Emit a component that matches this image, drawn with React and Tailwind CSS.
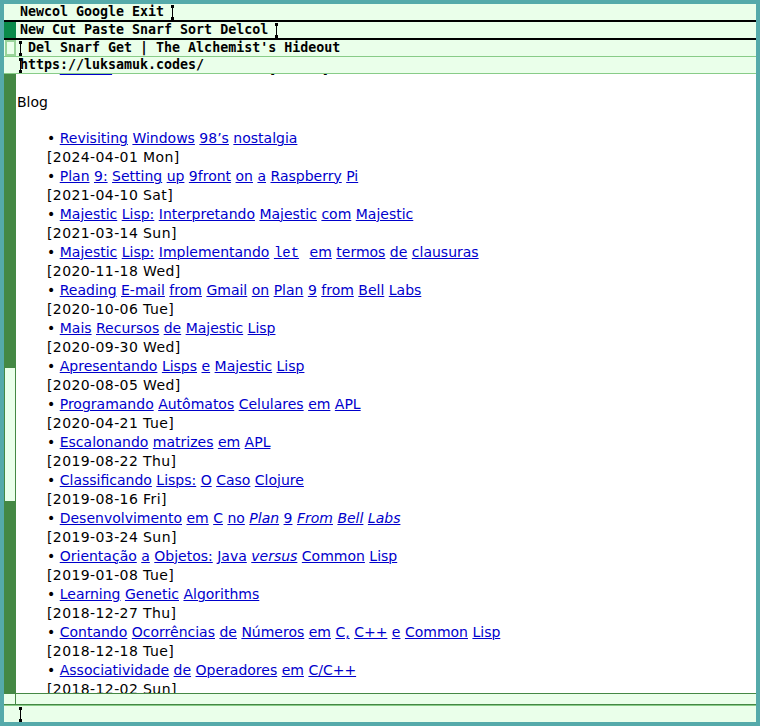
const posts = [
  ['Revisiting Windows 98’s nostalgia', '[2024-04-01 Mon]'],
  ['Plan 9: Setting up 9front on a Raspberry Pi', '[2021-04-10 Sat]'],
  ['Majestic Lisp: Interpretando Majestic com Majestic', '[2021-03-14 Sun]'],
  [['Majestic', 'Lisp:', 'Implementando', { t: 'let', mono: true }, 'em', 'termos', 'de', 'clausuras'], '[2020-11-18 Wed]'],
  ['Reading E-mail from Gmail on Plan 9 from Bell Labs', '[2020-10-06 Tue]'],
  ['Mais Recursos de Majestic Lisp', '[2020-09-30 Wed]'],
  ['Apresentando Lisps e Majestic Lisp', '[2020-08-05 Wed]'],
  ['Programando Autômatos Celulares em APL', '[2020-04-21 Tue]'],
  ['Escalonando matrizes em APL', '[2019-08-22 Thu]'],
  ['Classificando Lisps: O Caso Clojure', '[2019-08-16 Fri]'],
  [['Desenvolvimento', 'em', 'C', 'no', { t: 'Plan', i: true }, '9', { t: 'From', i: true }, { t: 'Bell', i: true }, { t: 'Labs', i: true }], '[2019-03-24 Sun]'],
  [['Orientação', 'a', 'Objetos:', 'Java', { t: 'versus', i: true }, 'Common', 'Lisp'], '[2019-01-08 Tue]'],
  ['Learning Genetic Algorithms', '[2018-12-27 Thu]'],
  ['Contando Ocorrências de Números em C, C++ e Common Lisp', '[2018-12-18 Tue]'],
  ['Associatividade de Operadores em C/C++', '[2018-12-02 Sun]'],
]

// acme-style text cursor
const Tick = () => (
  <svg width="3" height="15" viewBox="0 0 3 15" className="-ml-[1px] -mr-[2px] shrink-0">
    <rect x="0" y="0" width="3" height="3" fill="#000" />
    <rect x="1" y="0" width="1" height="15" fill="#000" />
    <rect x="0" y="12" width="3" height="3" fill="#000" />
  </svg>
)

function Title({ words }) {
  const list = typeof words === 'string' ? words.split(' ') : words
  return list.map((w, i) => {
    const word = typeof w === 'string' ? { t: w } : w
    return (
      <span key={i}>
        {i > 0 && ' '}
        <a
          href="#"
          className={
            'text-[#0000CC] underline decoration-1 ' +
            (word.i ? 'italic ' : '') +
            (word.mono ? "font-['Liberation_Mono',monospace] mr-[6px] " : '')
          }
        >
          {word.t}
        </a>
      </span>
    )
  })
}

function App() {
  return (
    <div className="h-[726px] w-[760px] bg-[#55AAAA] p-[4px]">
      <div className="flex h-full flex-col overflow-hidden">
        {/* tags */}
        <div className="font-['DejaVu_Sans_Mono',monospace] text-[13.3px] font-bold leading-[16px] text-black">
          <div className="flex h-[16px] items-center bg-[#EAFFEA] pl-[16px]">
            <span className="whitespace-pre">Newcol Google Exit </span>
            <Tick />
          </div>
          <div className="h-[2px] bg-black" />
          <div className="flex h-[16px] items-center bg-[#EAFFEA]">
            <div className="h-full w-[12px] bg-[#0B8A4A]" />
            <span className="whitespace-pre pl-[4px]">New Cut Paste Snarf Sort Delcol </span>
            <Tick />
          </div>
          <div className="h-[2px] bg-black" />
          <div className="flex h-[16px] items-center bg-[#EAFFEA]">
            <div className="ml-[1px] h-full w-[11px] border-2 border-[#9AD49A] bg-[#EAFFEA]" />
            <div className="w-[4px]" />
            <Tick />
            <span className="whitespace-pre"> Del Snarf Get | The Alchemist's Hideout</span>
          </div>
          <div className="h-[1px] bg-[#88CC88]" />
          <div className="flex h-[16px] items-center bg-[#EAFFEA] pl-[16px]">
            <Tick />
            <span className="whitespace-pre">https://luksamuk.codes/</span>
          </div>
          <div className="h-[1px] bg-[#88CC88]" />
        </div>

        {/* body */}
        <div className="flex min-h-0 flex-1">
          <div className="flex w-[12px] flex-col bg-[#448844]">
            <div className="h-[294px]" />
            <div className="mx-[1px] h-[133px] bg-[#EAFFEA]" />
          </div>
          <div className="flex-1 overflow-hidden bg-white pl-[1px] font-['DejaVu_Sans',sans-serif] text-[14px] leading-[19px] text-black">
            <div className="-mt-[15px] flex h-[19px] whitespace-pre pl-[30px]">
              <span>• </span>
              <a href="#" className="text-[#0000CC] underline decoration-1">Archive</a>
              <span className="w-[158px]" />
              <span>[</span>
              <span className="w-[47px]" />
              <span>]</span>
            </div>
            <div className="h-[15px]" />
            <div className="h-[19px]">Blog</div>
            <div className="h-[17px]" />
            {posts.map(([title, date], i) => (
              <div key={i}>
                <div className="h-[19px] whitespace-pre pl-[30px]">
                  <span>• </span>
                  <Title words={title} />
                </div>
                <div className="h-[19px] pl-[30px] tracking-[0.4px]">{date}</div>
              </div>
            ))}
          </div>
        </div>

        {/* next window */}
        <div className="h-[1px] bg-[#448844]" />
        <div className="flex h-[10px] bg-[#EAFFEA]">
          <div className="w-[12px] border-r border-[#448844]" />
        </div>
        <div className="h-[1px] bg-[#448844]" />
        <div className="h-[1px] bg-[#88CC88]" />
        <div className="flex h-[16px] items-center bg-[#EAFFEA] pl-[16px]">
          <Tick />
        </div>
      </div>
    </div>
  )
}

export default App
